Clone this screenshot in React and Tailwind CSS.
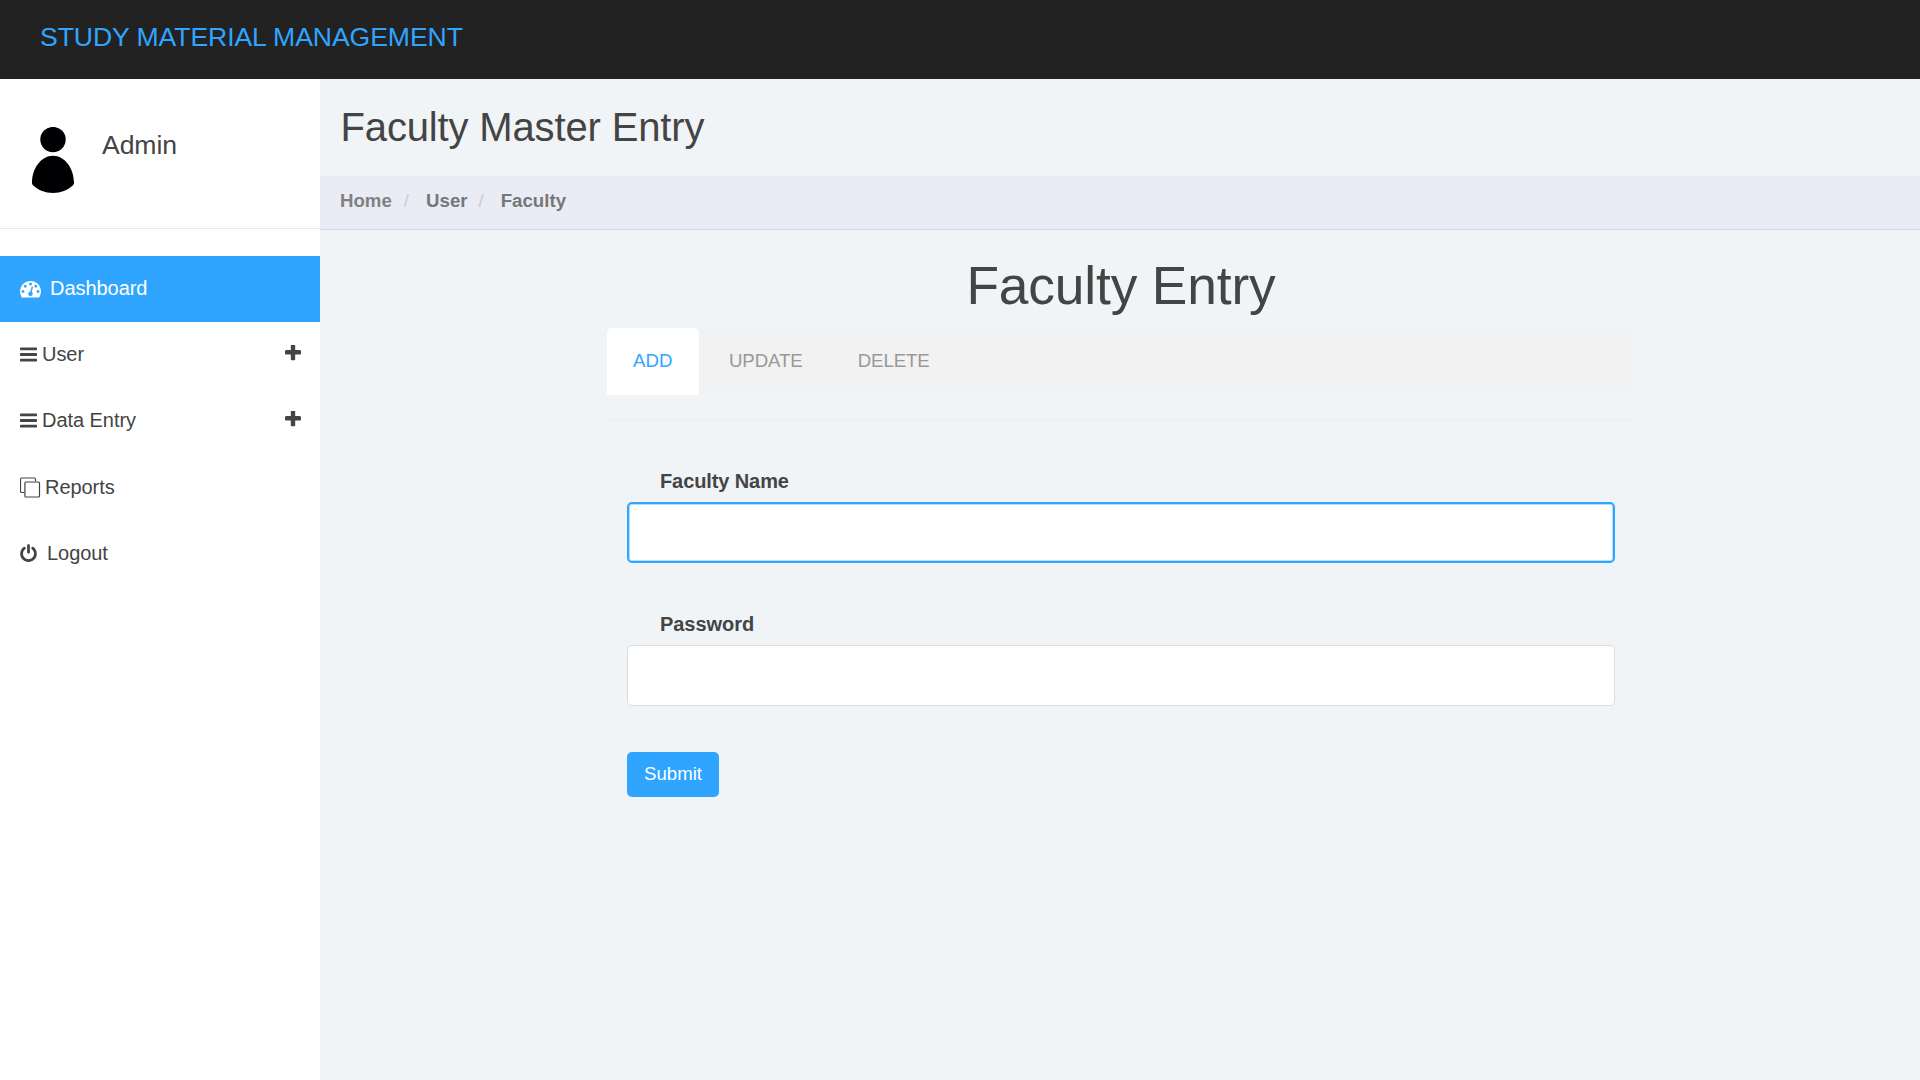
const ICONS = {
  dashboard:
    "M384 1152q0-53-37.5-90.5t-90.5-37.5-90.5 37.5-37.5 90.5 37.5 90.5 90.5 37.5 90.5-37.5 37.5-90.5zm192-448q0-53-37.5-90.5t-90.5-37.5-90.5 37.5-37.5 90.5 37.5 90.5 90.5 37.5 90.5-37.5 37.5-90.5zm428 481l101-382q6-26-7.5-48.5t-38.5-29.5-48 6.5-30 39.5l-101 382q-60 5-107 43.5t-63 98.5q-20 77 20 146t117 89 146-20 89-117q16-60-6-117t-72-91zm660-33q0-53-37.5-90.5t-90.5-37.5-90.5 37.5-37.5 90.5 37.5 90.5 90.5 37.5 90.5-37.5 37.5-90.5zm-640-640q0-53-37.5-90.5t-90.5-37.5-90.5 37.5-37.5 90.5 37.5 90.5 90.5 37.5 90.5-37.5 37.5-90.5zm448 192q0-53-37.5-90.5t-90.5-37.5-90.5 37.5-37.5 90.5 37.5 90.5 90.5 37.5 90.5-37.5 37.5-90.5zm320 448q0 261-141 483-19 29-54 29h-1402q-35 0-54-29-141-221-141-483 0-182 71-348t191-286 286-191 348-71 348 71 286 191 191 286 71 348z",
  bars: "M1664 1344v128q0 26-19 45t-45 19h-1408q-26 0-45-19t-19-45v-128q0-26 19-45t45-19h1408q26 0 45 19t19 45zm0-512v128q0 26-19 45t-45 19h-1408q-26 0-45-19t-19-45v-128q0-26 19-45t45-19h1408q26 0 45 19t19 45zm0-512v128q0 26-19 45t-45 19h-1408q-26 0-45-19t-19-45v-128q0-26 19-45t45-19h1408q26 0 45 19t19 45z",
  plus: "M1600 736v192q0 40-28 68t-68 28h-416v416q0 40-28 68t-68 28h-192q-40 0-68-28t-28-68v-416h-416q-40 0-68-28t-28-68v-192q0-40 28-68t68-28h416v-416q0-40 28-68t68-28h192q40 0 68 28t28 68v416h416q40 0 68 28t28 68z",
  power:
    "M1664 896q0 156-61 298t-164 245-245 164-298 61-298-61-245-164-164-245-61-298q0-182 80.5-343t226.5-270q43-32 95.5-25t83.5 50q32 42 24.5 94.5t-49.5 84.5q-98 74-151.5 181t-53.5 228q0 104 40.5 198.5t109.5 163.5 163.5 109.5 198.5 40.5 198.5-40.5 163.5-109.5 109.5-163.5 40.5-198.5q0-121-53.5-228t-151.5-181q-42-32-49.5-84.5t24.5-94.5q31-43 84-50t95 25q146 109 226.5 270t80.5 343zm-640-768v640q0 52-38 90t-90 38-90-38-38-90v-640q0-52 38-90t90-38 90 38 38 90z",
};

function Glyph({ name, viewBox = "0 0 1792 1792", className }) {
  return (
    <svg viewBox={viewBox} className={className} fill="currentColor" aria-hidden="true">
      <path d={ICONS[name]} />
    </svg>
  );
}

function CopyIcon() {
  return (
    <svg viewBox="0 0 21 21" className="-mt-[2px] h-[21px] w-[21px] shrink-0" fill="none" stroke="currentColor" strokeWidth="1.2" aria-hidden="true">
      <path d="M4.500 15.500H1.700a1.200 1.200 0 0 1-1.200-1.200V2.200A1.200 1.200 0 0 1 1.700 1h12.600a1.200 1.200 0 0 1 1.200 1.200V4.500" />
      <rect x="4.900" y="5" width="14.600" height="15" rx="1" />
    </svg>
  );
}

function Avatar() {
  return (
    <svg viewBox="0 0 42 66" className="h-[66px] w-[42px] shrink-0" fill="#000003" aria-hidden="true">
      <circle cx="21" cy="12.6" r="12.7" />
      <path d="M21 28.7C33 28.7 42 41.500 42 55.500C42 57 41.700 57.800 40.500 58.800C35.500 63.200 29 66 21 66S6.500 63.200 1.500 58.800C0.300 57.800 0 57 0 55.500C0 41.500 9 28.700 21 28.700Z" />
    </svg>
  );
}

const navRow = "flex h-[66px] items-center pl-5 pr-[19px] text-[20px] leading-[24px] tracking-[-0.05px]";

function Sidebar() {
  return (
    <aside className="w-[320px] shrink-0 bg-white">
      <div className="flex h-[150px] border-b border-[#e7e9f2] pl-8 pt-[48px]">
        <Avatar />
        <span className="ml-[28px] mt-[3px] text-[26.6px] leading-[30px] tracking-[-0.1px]">Admin</span>
      </div>
      <nav className="pt-[27px]">
        <a className={`${navRow} bg-[#30a5ff] text-white`}>
          <Glyph name="dashboard" className="-mt-[2px] h-[21px] w-[21px] shrink-0" />
          <span className="-mt-[2px] ml-[9px]">Dashboard</span>
        </a>
        <a className={navRow}>
          <Glyph name="bars" viewBox="128 128 1536 1536" className="-mt-[2px] h-[17px] w-[17px] shrink-0" />
          <span className="-mt-[2px] ml-[5px] flex-1">User</span>
          <Glyph name="plus" viewBox="192 192 1408 1408" className="-mt-1 h-4 w-4 shrink-0" />
        </a>
        <a className={navRow}>
          <Glyph name="bars" viewBox="128 128 1536 1536" className="-mt-[2px] h-[17px] w-[17px] shrink-0" />
          <span className="-mt-[2px] ml-[5px] flex-1">Data Entry</span>
          <Glyph name="plus" viewBox="192 192 1408 1408" className="-mt-1 h-4 w-4 shrink-0" />
        </a>
        <a className={`${navRow} mt-px`}>
          <CopyIcon />
          <span className="-mt-[2px] ml-[4px]">Reports</span>
        </a>
        <a className={navRow}>
          <Glyph name="power" viewBox="128 0 1536 1664" className="-mt-[2px] h-[18px] w-[17px] shrink-0" />
          <span className="-mt-[2px] ml-[10px]">Logout</span>
        </a>
      </nav>
    </aside>
  );
}

export default function App() {
  return (
    <div className="flex h-screen w-full flex-col overflow-hidden bg-[#f0f4f7] font-['Liberation_Sans',Arial,sans-serif] text-[#444444]">
      <header className="flex h-[79px] shrink-0 items-start bg-[#222222] pl-10 pt-[22px]">
        <span className="text-[26.6px] leading-[30px] tracking-[-0.09px] text-[#30a5ff]">STUDY MATERIAL MANAGEMENT</span>
      </header>
      <div className="flex min-h-0 flex-1">
        <Sidebar />
        <main className="min-w-0 flex-1">
          <h1 className="flex h-[97px] items-start pl-[20.500px] pt-[25px] text-[40px] leading-[46px] tracking-[-0.15px]">Faculty Master Entry</h1>
          <div className="flex h-[54px] items-center border-b border-[#d7dae2] bg-[#e9ecf4] pb-[3px] pl-5 text-[18.66px] leading-[22px]">
            <b className="text-[#818080]">Home</b>
            <span className="ml-[12px] text-[#cccccc]">/</span>
            <b className="ml-[17px] text-[#777777]">User</b>
            <span className="ml-[11px] text-[#cccccc]">/</span>
            <b className="ml-[17px] text-[#777777]">Faculty</b>
          </div>
          <section className="ml-[287px] w-[1028px]">
            <h2 className="flex h-[98px] justify-center pt-[26px] text-[53.3px] leading-[60px] tracking-[-0.15px]">Faculty Entry</h2>
            <div className="flex h-[65px] rounded-t-[5px] bg-[#f2f2f2] text-[18.66px] leading-[22px] text-[#999999]">
              <a className="h-[67px] w-[92px] rounded-t-[5px] bg-white pl-[26px] pt-[22px] text-[#30a5ff]">ADD</a>
              <a className="ml-[30px] pt-[22px] tracking-[-0.1px]">UPDATE</a>
              <a className="ml-[55px] pt-[22px] tracking-[-0.1px]">DELETE</a>
            </div>
            <hr className="mt-[27px] border-[#eeeeee]" />
            <form className="px-5 pt-[48px]">
              <label className="block pl-[33px] text-[20px] font-bold leading-[24px] tracking-[-0.1px]">Faculty Name</label>
              <div className="mt-[9px] h-[61px] rounded-[5px] border-2 border-[#30a5ff] bg-white shadow-[inset_0_0_0_1px_#b5deff]" />
              <label className="mt-[49px] block pl-[33px] text-[20px] font-bold leading-[24px] tracking-[-0.05px]">Password</label>
              <div className="mt-[9px] h-[61px] rounded-[5px] border border-[#dddddd] bg-white" />
              <button type="button" className="mt-[46px] flex h-[45px] w-[92px] justify-center rounded-[5px] bg-[#30a5ff] pt-[11px] text-[18.66px] leading-[22px] text-white">
                Submit
              </button>
            </form>
          </section>
        </main>
      </div>
    </div>
  );
}
